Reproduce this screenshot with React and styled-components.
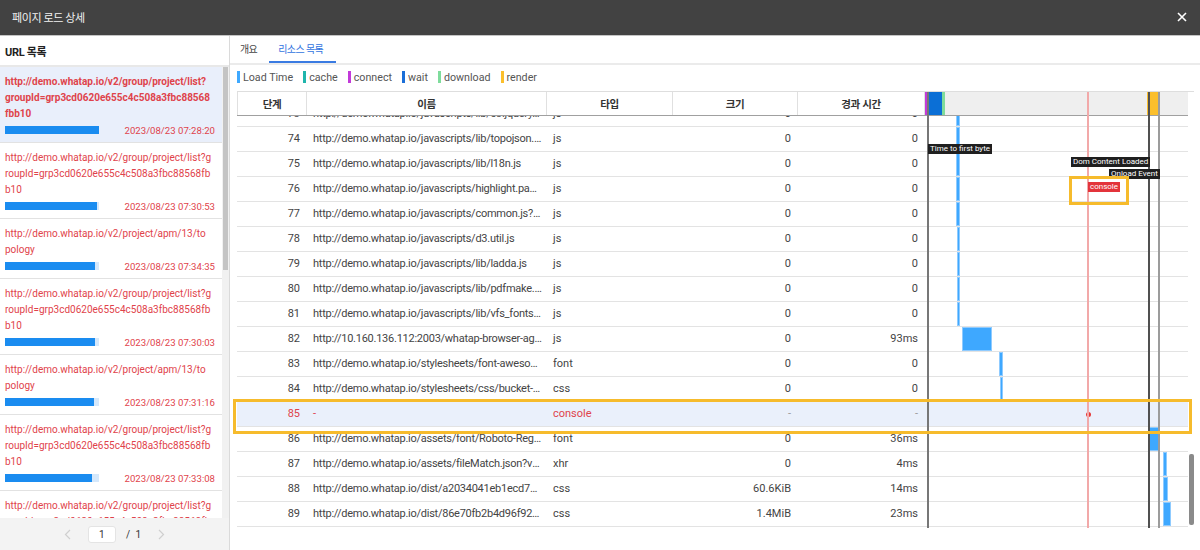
import React, { useLayoutEffect, useRef, useState } from 'react';
import styled, { createGlobalStyle } from 'styled-components';

const GlobalStyle = createGlobalStyle`
  html, body { margin: 0; padding: 0; background: #fff; }
  body { font-family: Roboto, "Noto Sans CJK KR", sans-serif; }
  * { box-sizing: border-box; }
`;

const RED = '#df434b';
const COLS = '70px 240px 126px 125px 127px 263px';

const Modal = styled.div`
  width: 1200px;
  height: 550px;
  display: flex;
  flex-direction: column;
  overflow: hidden;
  background: #fff;
`;

const TitleBar = styled.div`
  flex: none;
  height: 36px;
  background: #424242;
  border-bottom: 1px solid #c4c4c4;
  display: flex;
  align-items: center;
  justify-content: space-between;
  padding: 0 13px 1px 12px;
`;

const Title = styled.span`
  color: #f2f2f2;
  font-size: 11px;
  letter-spacing: -0.4px;
`;

const CloseButton = styled.button`
  border: none;
  background: none;
  padding: 0;
  width: 10px;
  height: 10px;
  display: flex;
  cursor: pointer;
`;

const Body = styled.div`
  flex: 1;
  display: flex;
  min-height: 0;
`;

const LeftPanel = styled.aside`
  width: 230px;
  flex: none;
  border-right: 1px solid #dadada;
  display: flex;
  flex-direction: column;
`;

const LeftHeader = styled.div`
  height: 31px;
  flex: none;
  border-bottom: 2px solid #e8e8e8;
  padding-left: 5px;
  display: flex;
  align-items: center;
  font-size: 11px;
  font-weight: 700;
  color: #222;
  letter-spacing: -0.3px;
`;

const ScrollFrame = styled.div`
  display: flex;
  flex: ${(p) => (p.$fill ? 1 : 'none')};
  height: ${(p) => (p.$height ? `${p.$height}px` : 'auto')};
  min-height: 0;
`;

const ScrollView = styled.div`
  flex: 1;
  min-width: 0;
  overflow: hidden;
`;

const Track = styled.div`
  position: relative;
  flex: none;
  width: ${(p) => p.$width}px;
  background: ${(p) => p.$bg};
`;

const Thumb = styled.span`
  position: absolute;
  left: 1px;
  right: ${(p) => p.$right}px;
  background: ${(p) => p.$color};
  border-radius: ${(p) => p.$radius}px;
`;

const UrlItem = styled.div`
  padding: 7px 7px 4px 5px;
  border-bottom: 1px solid #e2e2e2;
  background: ${(p) => (p.$selected ? '#e9effb' : '#fff')};
  color: ${RED};
`;

const UrlLine = styled.div`
  font-size: 10px;
  line-height: 16px;
  white-space: nowrap;
  font-weight: ${(p) => (p.$selected ? 700 : 400)};
`;

const UrlMeta = styled.div`
  height: 16px;
  display: flex;
  align-items: center;
  justify-content: space-between;
  font-size: 9.6px;
`;

const LoadBar = styled.div`
  width: 94px;
  height: 8px;
  background: #d5e8fb;
  display: flex;
`;

const LoadFill = styled.div`
  height: 100%;
  background: #1a8cf0;
`;

const Pager = styled.div`
  height: 32px;
  flex: none;
  background: #f3f3f3;
  display: flex;
  align-items: center;
  justify-content: center;
  font-size: 10px;
  color: #333;
`;

const PagerArrow = styled.span`
  display: flex;
  width: 20px;
  justify-content: center;
`;

const PageInput = styled.div`
  width: 28px;
  height: 17px;
  margin: 0 10px;
  background: #fff;
  border: 1px solid #e4e4e4;
  border-radius: 3px;
  display: flex;
  align-items: center;
  justify-content: center;
`;

const PageTotal = styled.span`
  margin-right: 10px;
  word-spacing: 3px;
`;

const RightPanel = styled.section`
  flex: 1;
  display: flex;
  flex-direction: column;
  min-width: 0;
`;

const Tabs = styled.div`
  height: 29px;
  flex: none;
  display: flex;
  border-bottom: 2px solid #ebebeb;
`;

const Tab = styled.div`
  height: 27px;
  display: flex;
  align-items: center;
  font-size: 10px;
  letter-spacing: -0.6px;
  color: ${(p) => (p.$active ? '#3274e0' : '#444')};
  border-bottom: 2px solid ${(p) => (p.$active ? '#3a7be2' : 'transparent')};
  padding: 0 ${(p) => (p.$active ? '13px' : '12px')} 0 ${(p) => (p.$active ? '9px' : '10px')};
`;

const Content = styled.div`
  flex: 1;
  padding: 6px 6px 0 7px;
  display: flex;
  flex-direction: column;
`;

const Legend = styled.div`
  height: 12px;
  display: flex;
  gap: 10px;
  margin-bottom: 8px;
`;

const LegendItem = styled.div`
  display: flex;
  align-items: center;
  gap: 3px;
  font-size: 10.7px;
  color: #555;
`;

const Swatch = styled.span`
  width: 3px;
  height: 12px;
  background: ${(p) => p.$color};
`;

const Table = styled.div`
  position: relative;
  width: 957px;
  border-top: 1px solid #dedede;
`;

const HeaderRow = styled.div`
  width: 951px;
  height: 24px;
  display: grid;
  grid-template-columns: ${COLS};
  border-bottom: 1px solid #a0a0a0;
`;

const HeadCell = styled.div`
  border-left: ${(p) => (p.$first ? '1px solid #e0e0e0' : 'none')};
  border-right: 1px solid #e0e0e0;
  display: flex;
  align-items: center;
  justify-content: center;
  font-size: 10.5px;
  font-weight: 700;
  color: #333;
  letter-spacing: -0.3px;
`;

const ChartHead = styled.div`
  position: relative;
  background: #efefef;
`;

const Mark = styled.span`
  position: absolute;
  top: 0;
  bottom: 0;
  background: ${(p) => p.$color};
`;

const Row = styled.div`
  display: grid;
  grid-template-columns: ${COLS};
  height: 25px;
  border-bottom: 1px solid #e3e3e3;
  background: ${(p) => (p.$active ? '#eaf0fb' : '#fff')};
  color: ${(p) => (p.$active ? RED : '#444')};
  font-size: 11px;
  line-height: 24px;
`;

const NoCell = styled.div`
  text-align: right;
  padding-right: 7px;
`;

const TextCell = styled.div`
  padding: 0 ${(p) => (p.$long ? '5px' : '6px')} 0 6px;
  white-space: nowrap;
  overflow: hidden;
  text-overflow: ellipsis;
  letter-spacing: ${(p) => (p.$long ? '-0.25px' : '0')};
`;

const NumCell = styled.div`
  text-align: right;
  padding-right: 7px;
  color: ${(p) => (p.$muted ? '#9a9a9a' : 'inherit')};
`;

const ChartCell = styled.div`
  position: relative;
`;

const Bar = styled.span`
  position: absolute;
  top: 0;
  height: 24px;
  background: #3ea8ff;
  border: 1px solid #8fcbff;
`;

const Dot = styled.span`
  position: absolute;
  top: 10px;
  width: 5px;
  height: 5px;
  margin-left: -2px;
  border-radius: 50%;
  background: #e53a3a;
`;

const ChartOverlay = styled.div`
  position: absolute;
  left: 688px;
  top: 0;
  width: 263px;
  height: 436px;
  pointer-events: none;
`;

const VLine = styled.span`
  position: absolute;
  top: 0;
  bottom: 0;
  width: 2px;
  background: ${(p) => p.$color};
`;

const Tag = styled.span`
  position: absolute;
  height: 10px;
  padding: 0 2px;
  font-size: 8px;
  line-height: 10px;
  white-space: nowrap;
  color: #fff;
  background: ${(p) => (p.$red ? '#e3343b' : '#1f1f1f')};
`;

const Highlight = styled.span`
  position: absolute;
  border: 3px solid #f6bb2c;
  pointer-events: none;
`;

const GROUP_BOLD = [
  'http://demo.whatap.io/v2/group/project/list?',
  'groupId=grp3cd0620e655c4c508a3fbc88568',
  'fbb10',
];
const GROUP = [
  'http://demo.whatap.io/v2/group/project/list?g',
  'roupId=grp3cd0620e655c4c508a3fbc88568fb',
  'b10',
];
const TOPO = ['http://demo.whatap.io/v2/project/apm/13/to', 'pology'];

const urlItems = [
  { lines: GROUP_BOLD, time: '2023/08/23 07:28:20', fill: 100, selected: true },
  { lines: GROUP, time: '2023/08/23 07:30:53', fill: 98 },
  { lines: TOPO, time: '2023/08/23 07:34:35', fill: 96 },
  { lines: GROUP, time: '2023/08/23 07:30:03', fill: 96 },
  { lines: TOPO, time: '2023/08/23 07:31:16', fill: 95 },
  { lines: GROUP, time: '2023/08/23 07:33:08', fill: 93 },
  { lines: GROUP, time: '2023/08/23 07:35:42', fill: 92 },
  { lines: TOPO, time: '2023/08/23 07:36:10', fill: 90 },
  { lines: GROUP, time: '2023/08/23 07:37:25', fill: 88 },
  { lines: GROUP, time: '2023/08/23 07:38:02', fill: 86 },
  { lines: TOPO, time: '2023/08/23 07:39:47', fill: 84 },
  { lines: GROUP, time: '2023/08/23 07:40:19', fill: 80 },
  { lines: GROUP, time: '2023/08/23 07:41:33', fill: 78 },
  { lines: GROUP, time: '2023/08/23 07:42:08', fill: 75 },
];

const legend = [
  ['Load Time', '#3fa9ff'],
  ['cache', '#1fb5ac'],
  ['connect', '#c23ad9'],
  ['wait', '#1b6fd8'],
  ['download', '#7fdc9c'],
  ['render', '#fbbf2c'],
];

const lastRows = [
  { no: 73, name: 'http://demo.whatap.io/javascripts/lib/c3.jquery.min.js', type: 'js', size: '0', time: '0', bar: [31, 4] },
  { no: 74, name: 'http://demo.whatap.io/javascripts/lib/topojson.min.js', type: 'js', size: '0', time: '0', bar: [31, 4] },
  { no: 75, name: 'http://demo.whatap.io/javascripts/lib/l18n.js', type: 'js', size: '0', time: '0', bar: [31, 4] },
  { no: 76, name: 'http://demo.whatap.io/javascripts/highlight.pack.js', type: 'js', size: '0', time: '0', bar: [31, 4] },
  { no: 77, name: 'http://demo.whatap.io/javascripts/common.js?v=1692', type: 'js', size: '0', time: '0', bar: [31, 4] },
  { no: 78, name: 'http://demo.whatap.io/javascripts/d3.util.js', type: 'js', size: '0', time: '0', bar: [32, 3] },
  { no: 79, name: 'http://demo.whatap.io/javascripts/lib/ladda.js', type: 'js', size: '0', time: '0', bar: [32, 3] },
  { no: 80, name: 'http://demo.whatap.io/javascripts/lib/pdfmake.min.js', type: 'js', size: '0', time: '0', bar: [32, 3] },
  { no: 81, name: 'http://demo.whatap.io/javascripts/lib/vfs_fonts.js', type: 'js', size: '0', time: '0', bar: [32, 3] },
  { no: 82, name: 'http://10.160.136.112:2003/whatap-browser-agent.js', type: 'js', size: '0', time: '93ms', bar: [37, 30] },
  { no: 83, name: 'http://demo.whatap.io/stylesheets/font-awesome.min.css', type: 'font', size: '0', time: '0', bar: [74, 4] },
  { no: 84, name: 'http://demo.whatap.io/stylesheets/css/bucket-icons.css', type: 'css', size: '0', time: '0', bar: [75, 3] },
  { no: 85, name: '-', type: 'console', size: '-', time: '-', dot: 163, active: true },
  { no: 86, name: 'http://demo.whatap.io/assets/font/Roboto-Regular.woff2', type: 'font', size: '0', time: '36ms', bar: [223, 11] },
  { no: 87, name: 'http://demo.whatap.io/assets/fileMatch.json?v=1692', type: 'xhr', size: '0', time: '4ms', bar: [238, 4] },
  { no: 88, name: 'http://demo.whatap.io/dist/a2034041eb1ecd77f1c2.css', type: 'css', size: '60.6KiB', time: '14ms', bar: [238, 5] },
  { no: 89, name: 'http://demo.whatap.io/dist/86e70fb2b4d96f922a41.css', type: 'css', size: '1.4MiB', time: '23ms', bar: [238, 8] },
];

const rows = [
  ...Array.from({ length: 72 }, (_, i) => ({
    no: i + 1,
    name: `http://demo.whatap.io/javascripts/lib/module-${i + 1}.js`,
    type: 'js',
    size: '0',
    time: '0',
    bar: [30, 3],
  })),
  ...lastRows,
];

// measures a hidden-overflow view and returns the scrollbar thumb geometry
function useScrollThumb(toBottom) {
  const ref = useRef(null);
  const [thumb, setThumb] = useState({ top: 0, height: 0 });

  useLayoutEffect(() => {
    const el = ref.current;
    if (!el) return;
    if (toBottom) el.scrollTop = el.scrollHeight;
    const view = el.clientHeight;
    const full = el.scrollHeight;
    setThumb({
      top: (el.scrollTop / full) * view,
      height: (view / full) * view,
    });
  }, [toBottom]);

  return [ref, thumb];
}

function Chevron({ dir }) {
  return (
    <svg width="7" height="11" viewBox="0 0 7 11">
      <polyline
        points={dir === 'left' ? '6,1 1.5,5.5 6,10' : '1,1 5.5,5.5 1,10'}
        fill="none"
        stroke="#cfcfcf"
        strokeWidth="1.2"
      />
    </svg>
  );
}

export default function App() {
  const [listRef, listThumb] = useScrollThumb(false);
  const [tableRef, tableThumb] = useScrollThumb(true);

  return (
    <Modal>
      <GlobalStyle />
      <TitleBar>
        <Title>페이지 로드 상세</Title>
        <CloseButton aria-label="close">
          <svg width="10" height="10" viewBox="0 0 10 10">
            <path d="M1 1L9 9M9 1L1 9" stroke="#fff" strokeWidth="1.6" />
          </svg>
        </CloseButton>
      </TitleBar>
      <Body>
        <LeftPanel>
          <LeftHeader>URL 목록</LeftHeader>
          <ScrollFrame $fill>
            <ScrollView ref={listRef}>
              {urlItems.map((item, i) => (
                <UrlItem key={i} $selected={item.selected}>
                  {item.lines.map((line) => (
                    <UrlLine key={line} $selected={item.selected}>
                      {line}
                    </UrlLine>
                  ))}
                  <UrlMeta>
                    <LoadBar>
                      <LoadFill style={{ width: `${item.fill}%` }} />
                    </LoadBar>
                    <span>{item.time}</span>
                  </UrlMeta>
                </UrlItem>
              ))}
            </ScrollView>
            <Track $width={7} $bg="#f1f1f1">
              <Thumb
                $right={1}
                $radius={0}
                $color="#c4c4c4"
                style={{ top: listThumb.top, height: listThumb.height }}
              />
            </Track>
          </ScrollFrame>
          <Pager>
            <PagerArrow>
              <Chevron dir="left" />
            </PagerArrow>
            <PageInput>1</PageInput>
            <PageTotal>/ 1</PageTotal>
            <PagerArrow>
              <Chevron dir="right" />
            </PagerArrow>
          </Pager>
        </LeftPanel>
        <RightPanel>
          <Tabs>
            <Tab>개요</Tab>
            <Tab $active>리소스 목록</Tab>
          </Tabs>
          <Content>
            <Legend>
              {legend.map(([label, color]) => (
                <LegendItem key={label}>
                  <Swatch $color={color} />
                  {label}
                </LegendItem>
              ))}
            </Legend>
            <Table>
              <HeaderRow>
                <HeadCell $first>단계</HeadCell>
                <HeadCell>이름</HeadCell>
                <HeadCell>타입</HeadCell>
                <HeadCell>크기</HeadCell>
                <HeadCell>경과 시간</HeadCell>
                <ChartHead>
                  <Mark $color="#c23ad9" style={{ left: 0, width: 2 }} />
                  <Mark $color="#0b6fd6" style={{ left: 2, width: 15 }} />
                  <Mark $color="#7fdc9c" style={{ left: 17, width: 3 }} />
                  <Mark $color="#fbbf2c" style={{ left: 222, width: 12 }} />
                </ChartHead>
              </HeaderRow>
              <ScrollFrame $height={411}>
                <ScrollView ref={tableRef}>
                  {rows.map((r) => (
                    <Row key={r.no} $active={r.active}>
                      <NoCell>{r.no}</NoCell>
                      <TextCell $long>{r.name}</TextCell>
                      <TextCell>{r.type}</TextCell>
                      <NumCell $muted={r.size === '-'}>{r.size}</NumCell>
                      <NumCell $muted={r.time === '-'}>{r.time}</NumCell>
                      <ChartCell>
                        {r.bar && <Bar style={{ left: r.bar[0], width: r.bar[1] }} />}
                        {r.dot && <Dot style={{ left: r.dot }} />}
                      </ChartCell>
                    </Row>
                  ))}
                </ScrollView>
                <Track $width={6} $bg="transparent">
                  <Thumb
                    $right={0}
                    $radius={2}
                    $color="#8a8a8a"
                    style={{ top: tableThumb.top + 3, height: tableThumb.height - 5 }}
                  />
                </Track>
              </ScrollFrame>
              <ChartOverlay>
                <VLine $color="#777" style={{ left: 2 }} />
                <VLine $color="#f2a9a9" style={{ left: 162 }} />
                <VLine $color="#505050" style={{ left: 223 }} />
                <VLine $color="#9c9c9c" style={{ left: 233 }} />
                <Tag style={{ left: 3, top: 52 }}>Time to first byte</Tag>
                <Tag style={{ left: 146, top: 65 }}>Dom Content Loaded</Tag>
                <Tag style={{ left: 184, top: 77 }}>Onload Event</Tag>
                <Tag $red style={{ left: 163, top: 90 }}>console</Tag>
                <Highlight style={{ left: 144, top: 84, width: 60, height: 29 }} />
              </ChartOverlay>
              <Highlight style={{ left: -4, top: 307, width: 959, height: 35 }} />
            </Table>
          </Content>
        </RightPanel>
      </Body>
    </Modal>
  );
}
